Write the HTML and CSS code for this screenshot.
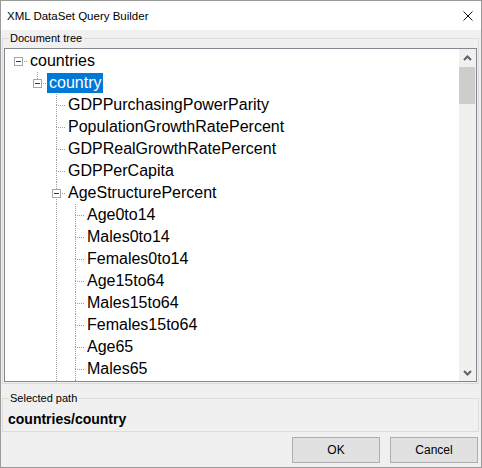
FILE: index.html
```html
<!DOCTYPE html>
<html lang="en">
<head>
    <meta charset="UTF-8">
    <title>XML DataSet Query Builder</title>
    <link rel="stylesheet" href="styles.css">
</head>
<body>
    <div class="window">
        <div class="titlebar">
            <span class="title">XML DataSet Query Builder</span>
            <svg class="close" width="10" height="10" viewBox="0 0 10 10">
                <path d="M0.5 0.5 L9.5 9.5 M9.5 0.5 L0.5 9.5" stroke="#111" stroke-width="1" fill="none"/>
            </svg>
        </div>

        <fieldset class="group tree-group">
            <legend>Document tree</legend>
            <div class="tree-box">
                <div id="tree" class="tree"></div>
                <div class="vscroll">
                    <div class="arrow">
                        <svg width="9" height="6" viewBox="0 0 9 6"><path d="M1 5 L4.5 1.5 L8 5" stroke="#606060" stroke-width="2" fill="none"/></svg>
                    </div>
                    <div class="thumb"></div>
                    <div class="track"></div>
                    <div class="arrow">
                        <svg width="9" height="6" viewBox="0 0 9 6"><path d="M1 1 L4.5 4.5 L8 1" stroke="#606060" stroke-width="2" fill="none"/></svg>
                    </div>
                </div>
            </div>
        </fieldset>

        <fieldset class="group path-group">
            <legend>Selected path</legend>
            <div id="path" class="path"></div>
        </fieldset>

        <div class="buttons">
            <button type="button">OK</button>
            <button type="button">Cancel</button>
        </div>
    </div>

    <script>
        const data = {
            name: "countries",
            children: [{
                name: "country",
                selected: true,
                children: [
                    { name: "GDPPurchasingPowerParity" },
                    { name: "PopulationGrowthRatePercent" },
                    { name: "GDPRealGrowthRatePercent" },
                    { name: "GDPPerCapita" },
                    {
                        name: "AgeStructurePercent",
                        children: [
                            { name: "Age0to14" },
                            { name: "Males0to14" },
                            { name: "Females0to14" },
                            { name: "Age15to64" },
                            { name: "Males15to64" },
                            { name: "Females15to64" },
                            { name: "Age65" },
                            { name: "Males65" },
                            { name: "Females65" }
                        ]
                    },
                    { name: "InfantMortalityRate" },
                    { name: "LifeExpectancy" }
                ]
            }]
        };

        // rows that fit in the view; the last one is only partly shown,
        // so it gets its lines but no caption
        const visibleRows = 16;
        let rowCount = 0;
        let selectedPath = "";

        function renderNode(node, guides, isLast, isRoot, path) {
            const hasChildren = node.children && node.children.length > 0;
            const fullPath = path ? path + "/" + node.name : node.name;
            if (node.selected) selectedPath = fullPath;
            if (rowCount >= visibleRows) return "";
            rowCount++;

            const connClasses = ["conn"];
            if (!isRoot) connClasses.push("up");
            if (!isLast) connClasses.push("down");

            let html = `<div class="row">`;
            html += guides.map(g => `<span class="cell${g ? " guide" : ""}"></span>`).join("");
            html += `<span class="cell ${connClasses.join(" ")}">${hasChildren ? '<span class="expander"></span>' : ""}</span>`;
            if (rowCount < visibleRows) {
                html += `<span class="label${node.selected ? " selected" : ""}">${node.name}</span>`;
            }
            html += `</div>`;

            if (hasChildren) {
                node.children.forEach((child, i) => {
                    html += renderNode(child, guides.concat(!isLast), i === node.children.length - 1, false, fullPath);
                });
            }
            return html;
        }

        document.getElementById("tree").innerHTML = renderNode(data, [], true, true, "");
        document.getElementById("path").textContent = selectedPath;
    </script>
</body>
</html>
```

FILE: styles.css
```css
* {
    box-sizing: border-box;
}
body {
    margin: 0;
    font-family: "Liberation Sans", Arial, sans-serif;
    font-size: 11px;
    color: #000;
}
.window {
    width: 482px;
    height: 468px;
    border: 1px solid #9a9a9a;
    background-color: #f0f0f0;
    display: flex;
    flex-direction: column;
    overflow: hidden;
}
.titlebar {
    height: 29px;
    flex: none;
    background-color: #fff;
    display: flex;
    align-items: center;
    justify-content: space-between;
    padding: 0 8px 0 6px;
}
.title {
    font-size: 11.5px;
}
.close {
    display: block;
}

/* group boxes */
.group {
    margin: 1px 2px 0 1px;
    padding: 3px 1px 1px 1px;
    border: 1px solid #dcdcdc;
    min-width: 0;
}
.group legend {
    margin-left: 5px;
    padding: 0 2px 0 1px;
    line-height: 14px;
    font-size: 11px;
}
.path-group {
    margin-top: 7px;
    padding: 6px 1px 4px 1px;
}
.path {
    padding-left: 4px;
    font-weight: bold;
    font-size: 14px;
    line-height: 16px;
}

/* tree view */
.tree-box {
    height: 334px;
    border: 1px solid #828790;
    background-color: #fff;
    display: flex;
}
.tree {
    flex: 1;
    overflow: hidden;
    padding: 1px 0 0 4px;
    font-size: 16px;
}
.row {
    display: flex;
    align-items: flex-start;
    height: 22px;
    white-space: nowrap;
}
.cell {
    --dot-v: repeating-linear-gradient(to bottom, #a0a0a0 0 1px, transparent 1px 2px);
    --dot-h: repeating-linear-gradient(to right, #a0a0a0 0 1px, transparent 1px 2px);
    flex: none;
    width: 19px;
    height: 22px;
    display: flex;
    justify-content: center;
    background-repeat: no-repeat;
}
.cell.guide {
    background-image: var(--dot-v);
    background-size: 1px 22px;
    background-position: 9px 0;
}
.conn {
    --up: none;
    --down: none;
    background-image: var(--up), var(--down), var(--dot-h);
    background-size: 1px 11px, 1px 11px, 10px 1px;
    background-position: 9px 0, 9px 11px, 9px 11px;
}
.conn.up {
    --up: var(--dot-v);
}
.conn.down {
    --down: var(--dot-v);
}
.expander {
    width: 9px;
    height: 9px;
    margin-top: 7px;
    border: 1px solid #a6a6a6;
    background-color: #fff;
}
.expander::after {
    content: "";
    display: block;
    width: 5px;
    height: 1px;
    margin: 3px auto 0;
    background-color: #1f3b73;
}
.label {
    margin-top: 1px;
    padding: 0 2px;
    line-height: 20px;
    height: 20px;
}
.label.selected {
    background-color: #0078d7;
    color: #fff;
}

/* scrollbar */
.vscroll {
    width: 17px;
    flex: none;
    background-color: #f0f0f0;
    display: flex;
    flex-direction: column;
}
.arrow {
    height: 17px;
    display: flex;
    align-items: center;
    justify-content: center;
}
.arrow svg {
    display: block;
}
.thumb {
    height: 37px;
    margin: 1px 1px 0 0;
    background-color: #cdcdcd;
}
.track {
    flex: 1;
}

/* dialog buttons */
.buttons {
    display: flex;
    justify-content: flex-end;
    gap: 10px;
    margin-top: 5px;
    padding-right: 3px;
}
button {
    width: 88px;
    height: 26px;
    border: 1px solid #adadad;
    background-color: #e1e1e1;
    font-family: "Liberation Sans", Arial, sans-serif;
    font-size: 12px;
    color: #000;
    padding: 0;
}
```
